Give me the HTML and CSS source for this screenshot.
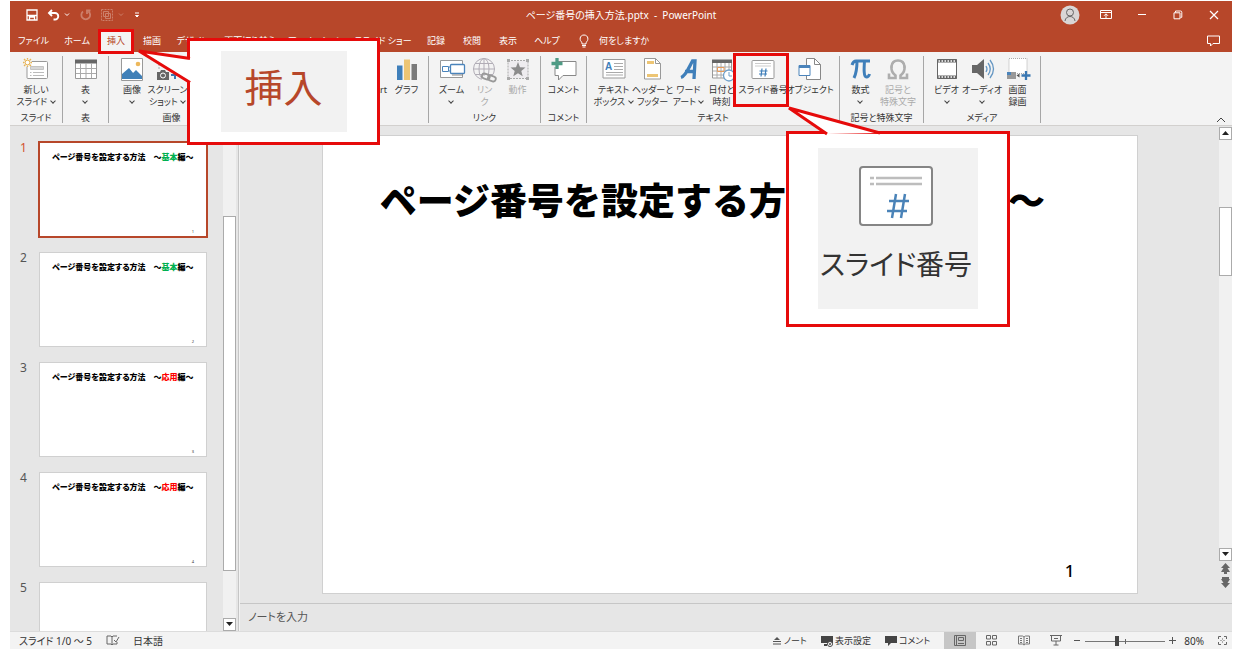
FILE: index.html
```html
<!DOCTYPE html>
<html lang="ja">
<head>
<meta charset="utf-8">
<title>ページ番号の挿入方法.pptx - PowerPoint</title>
<link rel="stylesheet" href="styles.css">
</head>
<body>
<div class="app">
  <header class="titlebar">
    <div class="quick">
      <button class="tb" aria-label="保存"><svg width="12" height="12" viewBox="0 0 12 12"><path d="M1 1h10v10H1zM1 6.500h10M3.500 11V8h5v3" fill="none" stroke="#fff" stroke-width="1.300"/></svg></button>
      <button class="tb" aria-label="元に戻す"><svg width="24" height="12" viewBox="0 0 24 12"><path d="M5 1L2 4l3 3M2.500 4H8a3 3 0 0 1 0 6.500H6.500" fill="none" stroke="#fff" stroke-width="1.900"/><path d="M18 4.500l2 2 2-2" fill="none" stroke="#fff"/></svg></button>
      <button class="tb faded" aria-label="やり直し"><svg width="12" height="12" viewBox="0 0 12 12"><path d="M3 2.500a4.400 4.400 0 1 0 5.500 0M10.500 1.500H7V5" fill="none" stroke="#fff" stroke-width="1.800"/></svg></button>
      <button class="tb faded" aria-label="グループ化"><svg width="24" height="12" viewBox="0 0 24 12"><path d="M.500.500h11v11H.500z" fill="none" stroke="#fff" stroke-dasharray="2 1"/><path d="M2.500 2.500h5v5h-5zM4.500 4.500h5v5h-5z" fill="none" stroke="#fff"/><path d="M18 4.500l2 2 2-2" fill="none" stroke="#fff"/></svg></button>
      <button class="tb" aria-label="クイックアクセスの設定"><svg width="6" height="8" viewBox="0 0 6 8"><path d="M1 2h4M1.500 4.500L3 6l1.500-1.500z" fill="#fff" stroke="#fff"/></svg></button>
    </div>
    <h1 class="doc-title">ページ番号の挿入方法.pptx&nbsp; -&nbsp; PowerPoint</h1>
    <div class="window-buttons">
      <button class="wb" aria-label="アカウント"><svg width="20" height="20" viewBox="0 0 20 20"><circle cx="10" cy="10" r="9.500" fill="#d9d6d5"/><circle cx="10" cy="7.500" r="3.500" fill="none" stroke="#666"/><path d="M5 16c.500-6 9.500-6 10 0" fill="none" stroke="#666"/></svg></button>
      <button class="wb" aria-label="リボンの表示オプション"><svg width="12" height="10" viewBox="0 0 12 10"><path d="M.500.500h11v8H.500zM.500 2.500h11M6 8V4M4 5.800l2-2 2 2" fill="none" stroke="#fff"/></svg></button>
      <button class="wb" aria-label="最小化"><svg width="10" height="10" viewBox="0 0 10 10"><path d="M1 4.500h8" stroke="#fff"/></svg></button>
      <button class="wb" aria-label="元のサイズに戻す"><svg width="10" height="10" viewBox="0 0 10 10"><path d="M1 2.800h6v6H1zM2.500 2.500V1h5q1.300 0 1.300 1.300v5H7.500" fill="none" stroke="#fff"/></svg></button>
      <button class="wb" aria-label="閉じる"><svg width="10" height="10" viewBox="0 0 10 10"><path d="M1 1l8 8M9 1L1 9" stroke="#fff" stroke-width="1.200"/></svg></button>
    </div>
  </header>

  <nav class="tabs">
    <button class="tab w-file">ファイル</button>
    <button class="tab w-home">ホーム</button>
    <button class="tab active">挿入</button>
    <button class="tab">描画</button>
    <button class="tab w-design">デザイン</button>
    <button class="tab w-trans">画面切り替え</button>
    <button class="tab w-anim">アニメーション</button>
    <button class="tab w-show">スライド ショー</button>
    <button class="tab">記録</button>
    <button class="tab">校閲</button>
    <button class="tab">表示</button>
    <button class="tab w-home">ヘルプ</button>
    <label class="tell-me"><svg width="12" height="14" viewBox="0 0 12 14"><path d="M4 10V8.500C1 6.500 1.500 1 6 1s5 5.500 2 7.500V10zM4 11.500h4M4.500 13h3" fill="none" stroke="#fff"/></svg><input class="tell-input" type="text" placeholder="何をしますか" aria-label="何をしますか"></label>
    <button class="tb tab-comment" aria-label="コメント"><svg width="13" height="12" viewBox="0 0 13 12"><path d="M.500 1h12v7.500H6L3.500 11V8.500h-3z" fill="none" stroke="#fff"/></svg></button>
  </nav>

  <section class="ribbon">
    <div class="group g-slide">
      <div class="items">
        <button class="item i-52"><svg width="26" height="24" viewBox="0 0 26 24"><rect x="4" y="3.500" width="20.500" height="17" rx="1" fill="#fff" stroke="#999"/><path d="M7.500 8.500h13v3h-13z" fill="#d6d6d6" stroke="#c4c4c4"/><path d="M7 14.500h1.500M10 14.500h11M7 17.500h1.500M10 17.500h11" stroke="#bbb"/><circle cx="4.500" cy="4.500" r="4.500" fill="#f3f3f3"/><circle cx="4.500" cy="4.500" r="2.300" fill="#fff" stroke="#e8b455"/><path d="M4.500 0v1.500M4.500 7.500V9M0 4.500h1.500M7.500 4.500H9M1 1l1.500 1.500M6.500 6.500L8 8M8 1L6.500 2.500M2.500 6.500L1 8" stroke="#e8b455" stroke-width="1.300"/></svg><span>新しい<br>スライド <i class="chev"></i></span></button>
      </div><div class="group-name">スライド</div>
    </div>
    <div class="group g-table">
      <div class="items">
        <button class="item i-36"><svg width="24" height="24" viewBox="0 0 24 24"><path d="M1.500 3h21v17.500h-21z" fill="#fff" stroke="#999"/><path d="M1 1.500h22v4H1z" fill="#666"/><path d="M2 10.500h20M2 15.500h20M6.500 5v15M12 5v15M17.500 5v15" stroke="#aaa"/></svg><span>表<br><i class="chev"></i></span></button>
      </div><div class="group-name">表</div>
    </div>
    <div class="group g-image">
      <div class="items">
        <button class="item i-36"><svg width="24" height="24" viewBox="0 0 24 24"><path d="M1.500.500h21v22h-21z" fill="#fff" stroke="#999"/><path d="M2 21v-5l7-6 9 11zM13 15l3-3 6 6v3h-4z" fill="#4080b8"/><circle cx="18" cy="6" r="2.300" fill="#edb85c"/></svg><span>画像<br><i class="chev"></i></span></button>
        <button class="item i-34"><svg width="26" height="24" viewBox="0 0 26 24"><path d="M4 11V2h18v10" fill="none" stroke="#aaa" stroke-dasharray="2 1"/><path d="M2 14h3l1-2h4l1 2h3v8H2z" fill="#666"/><circle cx="8" cy="17.500" r="2.500" fill="none" stroke="#fff"/><path d="M20 13v8M16 17h8" stroke="#3977b2" stroke-width="2"/></svg><span>スクリーン<br>ショット <i class="chev"></i></span></button>
      </div><div class="group-name">画像</div>
    </div>
    <div class="group g-shapes">
      <div class="items">
        <button class="item i-42"><svg width="24" height="24" viewBox="0 0 24 24"><path d="M2 7h12v10H2z" fill="#70ad47"/></svg><span>SmartArt</span></button>
        <button class="item i-34"><svg width="24" height="24" viewBox="0 0 24 24"><path d="M2 7.500h5.500V22H2z" fill="#3f7fba"/><path d="M9 1.500h6V22H9z" fill="#edc574"/><path d="M16.500 6H22v16h-5.500z" fill="#7a7a7a"/></svg><span>グラフ</span></button>
      </div>
    </div>
    <div class="group g-link">
      <div class="items">
        <button class="item i-33"><svg width="26" height="24" viewBox="0 0 26 24"><path d="M1.500 2.500h22v17h-22z" fill="#fff" stroke="#999"/><rect x="11.500" y="6.500" width="14" height="9" rx="1" fill="#fff" stroke="#4b84bb" stroke-width="1.300"/><path d="M13 17h11" stroke="#888"/><path d="M3.500 8.500h6v5h-6zM9.500 10l2-2M9.500 12l2 2" fill="#fff" stroke="#4b84bb"/></svg><span>ズーム<br><i class="chev"></i></span></button>
        <button class="item i-33 off"><svg width="26" height="24" viewBox="0 0 26 24"><g fill="none" stroke="#b1adb6"><circle cx="12" cy="11" r="10.500"/><ellipse cx="12" cy="11" rx="5" ry="10.500"/><path d="M12 0v22M1.500 11h21M3 5.500h18M3 16.500h18"/></g><path d="M10 18h15v6H10z" fill="#f3f3f3"/><g fill="none" stroke="#999" stroke-width="1.800"><rect x="10" y="16" width="8" height="5" rx="2.500" transform="rotate(18 14 18)"/><rect x="16" y="18" width="8" height="5" rx="2.500" transform="rotate(18 20 20)"/></g></svg><span>リン<br>ク</span></button>
        <button class="item i-33 off"><svg width="24" height="24" viewBox="0 0 24 24"><path d="M2 2.500h20v18H2z" fill="#eeecef" stroke="#aaa" stroke-dasharray="2 1"/><path d="M1 1h3v3H1zM20 1h3v3h-3zM1 19h3v3H1zM20 19h3v3h-3z" fill="#aaa"/><path d="M12 4l2 5.200 5.500.300-4.200 3.500 1.400 5.200L12 15.200l-4.700 3 1.400-5.200L4.500 9.500l5.500-.300z" fill="#8c8c8c"/></svg><span>動作</span></button>
      </div><div class="group-name">リンク</div>
    </div>
    <div class="group g-comment">
      <div class="items">
        <button class="item i-44"><svg width="26" height="24" viewBox="0 0 26 24"><path d="M6 3.500h19v14H12L7.500 22v-4.500H4V9" fill="#fff" stroke="#888"/><path d="M6 0v11M.500 5.500h11" stroke="#4f9b85" stroke-width="3.300"/></svg><span>コメント</span></button>
      </div><div class="group-name">コメント</div>
    </div>
    <div class="group g-text">
      <div class="items">
        <button class="item i-39"><svg width="24" height="24" viewBox="0 0 24 24"><path d="M1 1.500h22v18.500H1z" fill="#fff" stroke="#999"/><text x="3" y="12" class="glyph-a">A</text><path d="M12 5.500h9M12 8.500h9M12 11.500h9M4 14.500h17M4 17h17" stroke="#aaa"/></svg><span>テキスト<br>ボックス <i class="chev"></i></span></button>
        <button class="item i-39"><svg width="24" height="24" viewBox="0 0 24 24"><path d="M3.500.500h11l5 5v15.500h-16z" fill="#fff" stroke="#999"/><path d="M14.500.500v5h5" fill="none" stroke="#999"/><path d="M6 3h7v3H6zM6 16h11v3H6z" fill="#edc574"/></svg><span>ヘッダーと<br>フッター</span></button>
        <button class="item i-33"><svg width="24" height="24" viewBox="0 0 24 24"><path d="M4 19.500C9 18 12 9 15.500 3H18l-1 18M8 13.500h10" fill="none" stroke="#3f7fba" stroke-width="3.300"/></svg><span>ワード<br>アート <i class="chev"></i></span></button>
        <button class="item i-33"><svg width="26" height="24" viewBox="0 0 26 24"><path d="M3.500 4h19v16h-19z" fill="#fff" stroke="#999"/><path d="M3 1.500h20V5H3z" fill="#666"/><path d="M4 9h18M4 13h18M4 17h18M8 5v15M12 5v15M16 5v15M20 5v15" stroke="#aaa"/><path d="M8.500 9.500H15v4H8.500z" fill="none" stroke="#e69b5c"/><circle cx="20" cy="17.500" r="5.500" fill="#fff" stroke="#6f9fc9" stroke-width="1.300"/><path d="M20 14v4h3" fill="none" stroke="#6f9fc9"/></svg><span>日付と<br>時刻</span></button>
        <button class="item i-50"><svg width="24" height="24" viewBox="0 0 24 24"><rect x="1" y="2.500" width="22" height="18" rx="1" fill="#fff" stroke="#999"/><path d="M4 5.500h16M4 8h16" stroke="#ccc"/><path d="M11 10.500l-1 8M15 10.500l-1 8M8.500 13h8M8 16h8" stroke="#3f7fba" stroke-width="1.200"/></svg><span>スライド番号</span></button>
        <button class="item i-44"><svg width="24" height="24" viewBox="0 0 24 24"><path d="M8.500.500h8l6 6v15h-14z" fill="#fff" stroke="#888"/><path d="M16.500.500v6h6" fill="none" stroke="#888"/><path d="M1 7.500h11v10H1z" fill="#fff" stroke="#4b84bb"/><path d="M1 7h11v3H1z" fill="#4b84bb"/></svg><span>オブジェクト</span></button>
      </div><div class="group-name">テキスト</div>
    </div>
    <div class="group g-symbol">
      <div class="items">
        <button class="item i-33"><svg width="24" height="24" viewBox="0 0 24 24"><path d="M3 7c1-3 2-4 4-4h14M8 3c0 8-1 13-3 17M15.500 3c-.500 7-1 16 2 16 1.500 0 2.500-1 3-3" fill="none" stroke="#3f7fba" stroke-width="3"/></svg><span>数式<br><i class="chev"></i></span></button>
        <button class="item i-42 off"><svg width="24" height="24" viewBox="0 0 24 24"><path d="M3 15.500v4.500h6.500v-2.500C3.500 13 4 2.500 12 2.500S20.500 13 14.500 17.500V20H21v-4.500" fill="none" stroke="#adadad" stroke-width="2.600"/><path d="M5.500 10q0-5 3.500-7M18.500 10q0-5-3.500-7" fill="none" stroke="#adadad" stroke-width="2"/></svg><span>記号と<br>特殊文字</span></button>
      </div><div class="group-name">記号と特殊文字</div>
    </div>
    <div class="group g-media">
      <div class="items">
        <button class="item i-34"><svg width="24" height="24" viewBox="0 0 24 24"><path d="M2.500 1.500h19v19h-19z" fill="#fff" stroke="#666"/><path d="M2 3h20M2 19h20" stroke="#666" stroke-width="3"/><path d="M3.500 3h17M3.500 19h17" stroke="#fff" stroke-width="1.500" stroke-dasharray="1.500 1.500"/></svg><span>ビデオ<br><i class="chev"></i></span></button>
        <button class="item i-36"><svg width="24" height="24" viewBox="0 0 24 24"><path d="M2 7h5l7-6v20l-7-6H2z" fill="#666"/><path d="M16 8q2 3 0 6M18 5q4.500 6 0 12M20 2q7 9 0 18" fill="none" stroke="#6597c3" stroke-width="1.300"/></svg><span>オーディオ<br><i class="chev"></i></span></button>
        <button class="item i-34"><svg width="24" height="24" viewBox="0 0 24 24"><path d="M3 .500h18v15H3z" fill="#fff" stroke="#aaa" stroke-dasharray="1 1"/><path d="M1 14h9v7H1z" fill="#999"/><path d="M1 14h4v3H1z" fill="#4b84bb"/><path d="M10.500 17.500l3-2v4z" fill="#555"/><path d="M20 13v9M15.500 17.500h9" stroke="#3977b2" stroke-width="2.300"/></svg><span>画面<br>録画</span></button>
      </div><div class="group-name">メディア</div>
    </div>
    <button class="collapse" aria-label="リボンを折りたたむ"><svg width="10" height="6" viewBox="0 0 10 6"><path d="M1 5l4-4 4 4" fill="none" stroke="#444"/></svg></button>
  </section>

  <div class="workspace">
    <aside class="panel">
      <ol class="thumbs">
        <li class="row selected"><span class="num">1</span><div class="thumb"><p>ページ番号を設定する方法　〜<b class="green">基本</b>編〜</p><small>1</small></div></li>
        <li class="row"><span class="num">2</span><div class="thumb"><p>ページ番号を設定する方法　〜<b class="green">基本</b>編〜</p><small>2</small></div></li>
        <li class="row"><span class="num">3</span><div class="thumb"><p>ページ番号を設定する方法　〜<b class="red">応用</b>編〜</p><small>3</small></div></li>
        <li class="row"><span class="num">4</span><div class="thumb"><p>ページ番号を設定する方法　〜<b class="red">応用</b>編〜</p><small>4</small></div></li>
        <li class="row"><span class="num">5</span><div class="thumb"></div></li>
      </ol>
      <div class="scroll left-scroll">
        <div class="track"><div class="handle"></div></div>
        <button class="arrow" aria-label="下へ"><svg width="8" height="5" viewBox="0 0 8 5"><path d="M0 0h7L3.500 4z" fill="#222"/></svg></button>
      </div>
    </aside>
    <main class="editor">
      <div class="stage">
        <div class="canvas">
          <article class="slide"><h2 class="slide-title">ページ番号を設定する方法　〜<span class="green">基本</span>編〜</h2><p class="page-no">1</p></article>
        </div>
        <div class="scroll right-scroll">
          <button class="arrow" aria-label="上へ"><svg width="8" height="5" viewBox="0 0 8 5"><path d="M0 4h7L3.500 0z" fill="#222"/></svg></button>
          <div class="track"><div class="handle"></div></div>
          <button class="arrow" aria-label="下へ"><svg width="8" height="5" viewBox="0 0 8 5"><path d="M0 0h7L3.500 4z" fill="#222"/></svg></button>
          <button class="jump" aria-label="前のスライド"><svg width="9" height="11" viewBox="0 0 9 11"><path d="M4.500 0L9 5H6.500L9 9H6V11H3V9H0L2.500 5H0z" fill="#666"/></svg></button>
          <button class="jump" aria-label="次のスライド"><svg width="9" height="11" viewBox="0 0 9 11"><path d="M4.500 11L9 6H6.500L9 2H8V0H1v2H0L2.500 6H0z" fill="#666"/></svg></button>
        </div>
      </div>
      <textarea class="notes" placeholder="ノートを入力" aria-label="ノート"></textarea>
    </main>
  </div>

  <footer class="status">
    <div class="status-left">
      <span>スライド 1/0 ～ 5</span>
      <button class="sb" aria-label="校正"><svg width="13" height="11" viewBox="0 0 13 11"><path d="M6 2L5 1H1v8h4l1 1 1-1h4V7M6 2v8M6 2l1-1h4M8 5l2 2 3-5" fill="none" stroke="#666"/></svg></button>
      <span>日本語</span>
    </div>
    <div class="status-right">
      <button class="sb"><svg width="10" height="10" viewBox="0 0 10 10"><path d="M5 1l3 3H2z" fill="#555"/><path d="M1 5.500h8M1 8h8" stroke="#555"/></svg><span>ノート</span></button>
      <button class="sb"><svg width="12" height="12" viewBox="0 0 12 12"><path d="M0 1h12v7H0zM3 9h3v2H3z" fill="#444"/><circle cx="9" cy="9" r="2.500" fill="#fff" stroke="#444"/><circle cx="9" cy="9" r="1" fill="#444"/></svg><span>表示設定</span></button>
      <button class="sb"><svg width="12" height="10" viewBox="0 0 12 10"><path d="M0 0h12v7H6L3 10V7H0z" fill="#444"/></svg><span>コメント</span></button>
      <div class="views">
        <button class="view on" aria-label="標準"><svg width="12" height="11" viewBox="0 0 12 11"><path d="M.500.500h11v10H.500zM2.500 0v11M4.500 2.500h5v3h-5zM4 8.500h6" fill="none" stroke="#666"/></svg></button>
        <button class="view" aria-label="スライド一覧"><svg width="12" height="11" viewBox="0 0 12 11"><path d="M.500.500h4v3.500h-4zM6.500.500h4v3.500h-4zM.500 6.500h4V10h-4zM6.500 6.500h4V10h-4z" fill="none" stroke="#666"/></svg></button>
        <button class="view" aria-label="閲覧表示"><svg width="12" height="11" viewBox="0 0 12 11"><path d="M.500 1h4L6 2l1.500-1h4v8h-4L6 10 4.500 9h-4zM6 2v8M2 3.500h2M2 5.500h2M2 7.500h2M8 3.500h2M8 5.500h2M8 7.500h2" fill="none" stroke="#777"/></svg></button>
        <button class="view" aria-label="スライドショー"><svg width="12" height="11" viewBox="0 0 12 11"><path d="M0 .500h12M1.500.500V6h9V.500M6 6v4M3.500 10h5M4 3.500h4" fill="none" stroke="#666"/></svg></button>
      </div>
      <div class="zoom">
        <button class="sb" aria-label="縮小"><svg width="7" height="7" viewBox="0 0 7 7"><path d="M0 3.500h6" stroke="#555"/></svg></button>
        <input class="zoom-range" type="range" min="0" max="100" value="39" aria-label="ズーム">
        <button class="sb" aria-label="拡大"><svg width="7" height="7" viewBox="0 0 7 7"><path d="M0 3.500h7M3.500 0v7" stroke="#555"/></svg></button>
      </div>
      <button class="sb percent">80%</button>
      <button class="sb" aria-label="ウィンドウに合わせる"><svg width="9" height="9" viewBox="0 0 9 9"><path d="M.500 3V.500H3M6 .500h2.500V3M8.500 6v2.500H6M3 8.500H.500V6M2.500 4.500h1M5.500 4.500h1M4.500 2.500v1M4.500 5.500v1" fill="none" stroke="#666"/></svg></button>
    </div>
  </footer>

  <div class="mark mark-tab"></div>
  <div class="mark mark-number"></div>

  <figure class="callout callout-insert">
    <div class="sample"><span>挿入</span></div>
    <svg class="pointer" width="56" height="40" viewBox="0 0 56 40"><path d="M56 9.500L5 2l51 31.500" fill="#fff" stroke="#e60b0b" stroke-width="3"/></svg>
  </figure>
  <figure class="callout callout-number">
    <div class="sample">
      <svg width="74" height="60" viewBox="0 0 74 60"><rect x="1" y="1" width="72" height="58" rx="3" fill="#fff" stroke="#858585" stroke-width="2"/><path d="M11 12h4M17 12h46M11 18h4M17 18h46" stroke="#bdbdbd" stroke-width="2.500"/><path d="M37 28l-4 24M46 28l-4 24M30 35h20M28 45h20" stroke="#4a83b8" stroke-width="2.500"/></svg>
      <span>スライド番号</span>
    </div>
    <svg class="pointer" width="104" height="32" viewBox="0 0 104 32"><path d="M45 29L7 3l91 25" fill="#fff" stroke="#e60b0b" stroke-width="3"/></svg>
  </figure>
</div>
</body>
</html>
```

FILE: styles.css
```css
* { box-sizing: border-box; }
body {
  margin: 0;
  background: #fff;
  color: #333;
  font: 10px/12px "Noto Sans", "Noto Sans CJK JP", sans-serif;
  font-feature-settings: "palt";
}
button, input, textarea { font: inherit; font-feature-settings: inherit; color: inherit; border: 0; background: none; padding: 0; margin: 0; }
svg { display: block; flex: none; overflow: visible; }
h1, h2, p, ol, figure { margin: 0; padding: 0; }

.app {
  position: relative;
  display: flex;
  flex-direction: column;
  height: calc(100vh - 6px);
  margin: 1px 13px 5px 10px;
  overflow: hidden;
  background: #e6e6e6;
}
.green { color: #00b050; }
.red { color: #f00; }

/* title bar */
.titlebar {
  display: grid;
  grid-template-columns: 1fr auto 1fr;
  align-items: center;
  height: 28px;
  background: #b7472a;
  color: #fff;
}
.quick { display: flex; align-items: center; gap: 9px; padding-left: 16px; }
.faded { opacity: .3; }
.doc-title { font-size: 10px; font-weight: 400; }
.window-buttons { display: flex; justify-content: flex-end; }
.wb { display: grid; place-items: center; width: 36px; height: 26px; }

/* tabs */
.tabs { display: flex; align-items: stretch; height: 23px; padding-left: 1px; background: #b7472a; color: #fff; }
.tab { width: 36px; font-size: 9px; white-space: nowrap; }
.tab.active { background: #f3f3f3; color: #b7472a; }
.w-file { width: 45px; }
.w-home { width: 42px; }
.w-design { width: 46px; }
.w-trans { width: 68px; }
.w-anim { width: 64px; }
.w-show { width: 70px; }
.tell-me { display: flex; align-items: center; gap: 9px; padding-left: 10px; }
.tell-input { width: 80px; font-size: 9px; }
.tell-input::placeholder { color: #fff; opacity: 1; }
.tab-comment { margin-left: auto; padding-right: 12px; }

/* ribbon */
.ribbon { display: flex; height: 74px; background: #f3f3f3; border-bottom: 1px solid #d2d0ce; padding: 4px 0 2px; }
.group { display: flex; flex-direction: column; justify-content: space-between; align-items: center; flex: none; border-right: 1px solid #a6a6a6; }
.items { display: flex; padding-top: 2px; }
.item { display: flex; flex-direction: column; align-items: center; gap: 2px; font-size: 9px; line-height: 12px; white-space: nowrap; }
.item span { display: block; margin: 0 -10px; }
.off { color: #aaa; }
.group-name { font-size: 9px; line-height: 10px; }
.chev { display: inline-block; width: 4px; height: 4px; border: solid #444; border-width: 0 1px 1px 0; transform: rotate(45deg); margin: 0 1px 2px; }
.glyph-a { font: bold 10px "Liberation Sans", sans-serif; fill: #3f7fba; }
.g-slide { width: 53px; }
.g-table { width: 46px; }
.g-image { width: 126px; }
.g-image .items { align-self: flex-start; padding-left: 5px; }
.g-shapes { width: 194px; align-items: flex-end; padding-right: 4px; }
.g-link { width: 112px; }
.g-comment { width: 46px; }
.g-text { width: 253px; }
.g-symbol { width: 84px; }
.g-media { width: 117px; }
.i-52 { width: 52px; }
.i-50 { width: 50px; }
.i-44 { width: 44px; }
.i-42 { width: 42px; }
.i-39 { width: 39px; }
.i-36 { width: 36px; }
.i-34 { width: 35px; }
.i-33 { width: 33px; }
.collapse { align-self: flex-end; margin-left: auto; padding-right: 6px; }

/* workspace */
.workspace { display: flex; flex: 1; min-height: 0; }
.panel { display: flex; width: 229px; flex: none; border-right: 1px solid #c6c6c6; overflow: hidden; }
.thumbs { flex: 1; padding: 16px 0 0 10px; list-style: none; display: flex; flex-direction: column; gap: 15px; }
.row { display: flex; gap: 9px; flex: none; }
.num { width: 10px; font-size: 12px; line-height: 12px; color: #555; }
.thumb { position: relative; width: 168px; height: 95px; background: #fff; border: 1px solid #d0d0d0; padding: 8px 0 0 12px; }
.thumb p { font-size: 8px; line-height: 12px; font-weight: 900; color: #000; white-space: nowrap; }
.thumb b { font-weight: 900; }
.thumb small { position: absolute; right: 12px; bottom: 2px; font-size: 4px; line-height: 4px; }
.selected .num { color: #d35230; }
.selected .thumb { outline: 2px solid #b7472a; outline-offset: -1px; }
.scroll { display: flex; flex-direction: column; width: 13px; flex: none; }
.left-scroll { margin-right: 2px; }
.track { flex: 1; background: #f1f1f1; }
.handle { background: #fff; border: 1px solid #ababab; }
.left-scroll .track { padding-top: 90px; }
.left-scroll .handle { height: 355px; }
.arrow { display: grid; place-items: center; height: 13px; background: #fff; border: 1px solid #ababab; }
.editor { display: flex; flex-direction: column; flex: 1; min-width: 0; border-left: 1px solid #f3f3f3; }
.stage { display: flex; flex: 1; min-height: 0; }
.canvas { display: flex; justify-content: center; flex: 1; min-width: 0; padding: 9px 0; }
.slide { position: relative; height: 100%; aspect-ratio: 16 / 9; background: #fff; border: 1px solid #d0d0d0; padding: 40px 34px 0 0; }
.slide-title { display: flex; justify-content: center; font-size: 37px; line-height: 50px; font-weight: 900; color: #000; white-space: nowrap; font-feature-settings: normal; }
.page-no { position: absolute; right: 62px; bottom: 12px; font-size: 17px; line-height: 20px; color: #000; font-weight: 500; }
.right-scroll { padding-top: 1px; padding-bottom: 14px; }
.right-scroll .track { padding-top: 67px; }
.right-scroll .handle { height: 69px; }
.jump { display: grid; place-items: center; height: 14px; }
.notes { height: 28px; flex: none; border-top: 1px solid #c6c6c6; padding: 6px 8px; resize: none; line-height: 14px; font-size: 11px; outline: 0; }
.notes::placeholder { color: #555; }

/* status bar */
.status { display: flex; justify-content: space-between; height: 18px; flex: none; background: #f3f3f3; border-top: 1px solid #dcdcdc; }
.status-left, .status-right, .zoom, .views { display: flex; align-items: center; }
.status-left { gap: 14px; padding-left: 9px; }
.status-right { gap: 14px; padding-right: 5px; }
.sb { display: flex; align-items: center; gap: 2px; white-space: nowrap; font-size: 9px; }
.status-left, .percent { font-size: 10px; }
.views { align-self: stretch; }
.view { display: grid; place-items: center; width: 32px; height: 17px; }
.view.on { background: #c6c6c6; }
.zoom { gap: 4px; margin: 0 -6px 0 -12px; }
.zoom-range {
  appearance: none;
  width: 80px;
  height: 10px;
  background:
    linear-gradient(#666, #666) 40px 3px / 1px 5px no-repeat,
    linear-gradient(#777, #777) 0 5px / 100% 1px no-repeat;
}
.zoom-range::-webkit-slider-thumb { appearance: none; width: 4px; height: 10px; background: #444; }

/* annotations over the window */
.mark { position: absolute; border: 3px solid #e60b0b; }
.mark-tab { left: 88px; top: 28px; width: 36px; height: 25px; }
.mark-number { left: 723px; top: 52px; width: 56px; height: 54px; }
.callout { position: absolute; display: grid; place-items: center; background: #fff; border: 3px solid #e60b0b; }
.pointer { position: absolute; }
.callout-insert { left: 177px; top: 37px; width: 193px; height: 107px; }
.callout-insert .sample { display: grid; place-items: center; width: 126px; height: 81px; background: #f2f2f2; color: #b7472a; font-size: 39px; line-height: 48px; padding-bottom: 10px; }
.callout-insert .pointer { left: -56px; top: 8px; }
.callout-number { left: 776px; top: 130px; width: 224px; height: 196px; }
.callout-number .sample { display: flex; flex-direction: column; align-items: center; gap: 18px; width: 160px; height: 161px; padding: 18px 4px 0 0; margin-top: -2px; background: #f2f2f2; color: #333; font-size: 28px; line-height: 40px; white-space: nowrap; }
.callout-number .pointer { left: -7px; top: -29px; }
```
